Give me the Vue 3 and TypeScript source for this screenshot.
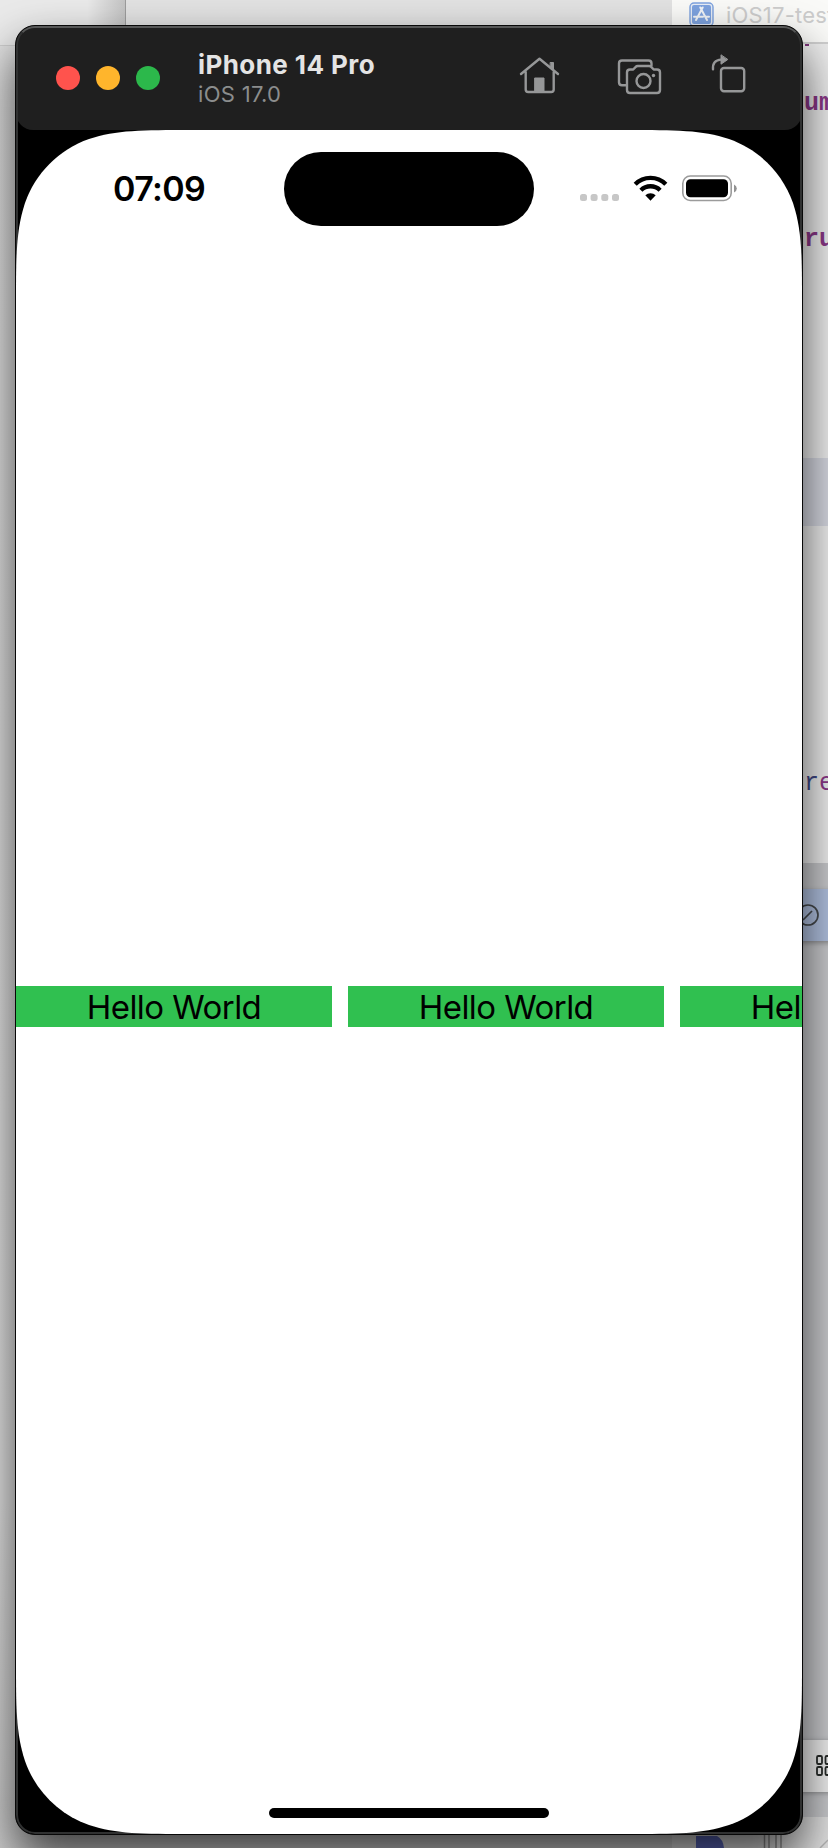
<script setup lang="ts">
interface Tile {
  id: number
  label: string
}

const device = { name: 'iPhone 14 Pro', os: 'iOS 17.0' }
const time = '07:09'
const lights: string[] = ['close', 'minimise', 'zoom']
const tiles: Tile[] = [1, 2, 3].map((id) => ({ id, label: 'Hello World' }))
</script>

<template>
  <main class="desktop">
    <div class="finder"></div>
    <section class="editor">
      <header class="tab">
        <svg class="app-icon" width="25" height="25" viewBox="0 0 25 25">
          <rect x="1" y="1" width="23" height="23" rx="4" fill="#e8edf6" stroke="#7da2df" stroke-width="1.4" />
          <rect x="3" y="3" width="19" height="19" rx="2" fill="#7da2df" />
          <path d="M13.7 5.5 7 18M11.3 5.5l6.7 12.5M5 14.7h9M17 14.7h3" fill="none" stroke="#f1f4f8" stroke-width="2" stroke-linecap="round" />
        </svg>
        <span>iOS17-test</span>
      </header>
      <i class="dot"></i>
      <code class="c1">um</code>
      <code class="c2">ru</code>
      <code class="c3"><b>r</b>e</code>
      <div class="current-line"></div>
    </section>
    <div class="canvas"></div>
    <div class="notice">
      <svg width="22" height="22" viewBox="0 0 22 22" fill="none" stroke="#45494c" stroke-width="1.7">
        <circle cx="11" cy="11" r="10" /><path d="M6 16l9-9" />
      </svg>
    </div>
    <div class="tools">
      <svg width="24" height="22" viewBox="0 0 24 22" fill="none" stroke="#272b29" stroke-width="1.8">
        <rect x="1" y="1" width="5" height="8" rx="1.3" /><rect x="9.5" y="1" width="5" height="8" rx="1.3" />
        <rect x="1" y="12" width="5" height="8" rx="1.3" /><rect x="9.5" y="12" width="5" height="8" rx="1.3" />
      </svg>
    </div>
    <div class="lower">
      <svg width="156" height="31" viewBox="0 0 156 31">
        <path d="M24 31V19h21q6 3 7 12z" fill="#5c69bd" />
        <path d="M92.500 0v31M97 0v31M104 0v31M109 0v31" stroke="#8d8d8d" stroke-width="1.500" />
        <path d="M148 31l8-8" stroke="#b4b4b4" stroke-width="1.500" />
      </svg>
    </div>

    <article class="simulator">
      <header class="titlebar">
        <div class="lights"><i v-for="l in lights" :key="l" :class="l"></i></div>
        <div class="names">
          <strong>{{ device.name }}</strong>
          <span>{{ device.os }}</span>
        </div>
        <svg class="actions" width="240" height="46" viewBox="510 50 240 46" fill="none" stroke="#969798" stroke-width="2.4" stroke-linecap="round" stroke-linejoin="round">
          <path d="M521 74l18.500-15.200L558 74M525.700 72v17.500q0 2.500 2.500 2.500h23q2.500 0 2.500-2.500V72" />
          <path d="M535 78h9v14h-9zM550.500 62.500h3v7l-3-2.500z" fill="#969798" stroke-width="1" />
          <path d="M625.500 85.300h-3.500q-3 0-3-3V63.500q0-3 3-3h26.500q3 0 3 3v2" />
          <path d="M630 69.500h3.200l2.500-2.600q.8-.9 2-.9h11.500q1.200 0 2 .9l2.500 2.600h3.300q3 0 3 3v17.500q0 3-3 3h-27q-3 0-3-3V72.500q0-3 3-3z" />
          <circle cx="643.500" cy="81" r="7" />
          <circle cx="653.500" cy="75.500" r="1.700" fill="#969798" stroke="none" />
          <rect x="721" y="68" width="23.200" height="23.200" rx="3" />
          <path d="M713 69.300q-.6-9.300 8-9.700" />
          <path d="M721 55.200v9l6.500-4.500z" fill="#969798" stroke-width="1" />
        </svg>
      </header>
      <div class="bezel">
        <div class="screen">
          <div class="status">
            <time>{{ time }}</time>
            <div class="island"></div>
            <svg class="indicators" width="160" height="30" viewBox="578 173 160 30">
              <g fill="#c7c7c7">
                <rect x="580" y="194" width="7" height="7" rx="2.500" /><rect x="590.600" y="194" width="7" height="7" rx="2.500" />
                <rect x="601.300" y="194" width="7" height="7" rx="2.500" /><rect x="612" y="194" width="7" height="7" rx="2.500" />
              </g>
              <g fill="none" stroke="#000" stroke-width="4.400">
                <path d="M635.200 184.200a21.700 21.700 0 0 1 30.600 0" />
                <path d="M640.900 190.200a13.700 13.700 0 0 1 19.200 0" />
              </g>
              <path d="M645.300 195.300a7.600 7.600 0 0 1 10.400 0l-5.200 5.400z" fill="#000" />
              <rect x="682.800" y="176" width="48.400" height="24.500" rx="7.500" fill="none" stroke="#9b9b9b" stroke-width="1.600" />
              <rect x="686" y="179.300" width="42" height="18" rx="4.500" fill="#000" />
              <path d="M734 184.500q2.800 1.300 2.800 4t-2.800 4z" fill="#929292" />
            </svg>
          </div>
          <div class="row">
            <div v-for="tile in tiles" :key="tile.id" class="tile"><span>{{ tile.label }}</span></div>
          </div>
          <div class="home-bar"></div>
        </div>
      </div>
    </article>
  </main>
</template>

<style>
html,
body {
  margin: 0;
  overflow: hidden;
}
</style>

<style scoped>
* {
  box-sizing: border-box;
}
.desktop {
  position: relative;
  width: 828px;
  height: 1848px;
  overflow: hidden;
  background: linear-gradient(#e2e2e2, #e6e6e6 1500px, #d0d0d0);
  font-family: Inter, "Liberation Sans", sans-serif;
}
.finder {
  position: absolute;
  left: 0;
  top: 0;
  width: 126px;
  height: 46px;
  background: linear-gradient(90deg, #eaeaea 70%, #c4c4c4);
  border-right: 1px solid #9c9c9c;
  border-bottom: 1px solid #cfcfcf;
}
.editor {
  position: absolute;
  left: 672px;
  top: 0;
  width: 156px;
  height: 863px;
  background: #ededed;
}
.tab {
  display: flex;
  gap: 12px;
  height: 44px;
  padding: 2px 0 0 17px;
  background: #fafaf8;
  border-bottom: 2px solid #cfcfcf;
  color: #cdcdcd;
  font-size: 22px;
  line-height: 27px;
  letter-spacing: 0.2px;
  white-space: nowrap;
}
.app-icon {
  flex: none;
}
.editor code {
  position: absolute;
  left: 132px;
  font: bold 25px/30px "Liberation Mono", monospace;
  color: #8a3787;
}
.editor .c1 {
  top: 89px;
}
.editor .c2 {
  top: 225px;
}
.editor .c3 {
  top: 769px;
  font-weight: normal;
}
.c3 b {
  font-weight: normal;
  color: #3f4684;
}
.dot {
  position: absolute;
  left: 133px;
  top: 44px;
  width: 4px;
  height: 2px;
  background: #7e357b;
}
.current-line {
  position: absolute;
  left: 0;
  top: 458px;
  width: 100%;
  height: 68px;
  background: rgba(184, 188, 208, 0.45);
}
.canvas {
  position: absolute;
  left: 672px;
  top: 863px;
  width: 156px;
  height: 954px;
  background: #c8c9cc;
}
.notice {
  position: absolute;
  left: 780px;
  top: 889px;
  width: 60px;
  height: 52px;
  padding: 15px 0 0 17px;
  background: #b0c0df;
  box-shadow: 0 2px 5px rgba(0, 0, 0, 0.3);
}
.tools {
  position: absolute;
  left: 780px;
  top: 1740px;
  width: 60px;
  height: 52px;
  padding: 15px 0 0 36px;
  background: #eee;
  box-shadow: 0 1px 5px rgba(0, 0, 0, 0.3);
}
.lower {
  position: absolute;
  left: 672px;
  top: 1817px;
  width: 156px;
  height: 31px;
  background: #e0e0e0;
}
.simulator {
  position: relative;
  display: flex;
  flex-direction: column;
  width: 788px;
  height: 1810px;
  margin: 25px 0 0 15px;
  overflow: hidden;
  border: 1px solid #080808;
  border-radius: 20px;
  background: #000;
  box-shadow: 0 24px 48px rgba(0, 0, 0, 0.7);
}
.simulator::after {
  position: absolute;
  inset: 0;
  border: 2px solid #303131;
  border-top-color: #575858;
  border-radius: 19px;
  content: "";
}
.titlebar {
  display: flex;
  flex: none;
  height: 104px;
  background: #1f1f1f;
  border-radius: 0 0 17px 17px;
}
.lights {
  display: flex;
  gap: 16px;
  padding: 40px 0 0 40px;
}
.lights i {
  width: 24px;
  height: 24px;
  border-radius: 50%;
}
.close {
  background: #ff534d;
}
.minimise {
  background: #ffb52c;
}
.zoom {
  background: #2cb84b;
}
.names {
  display: flex;
  flex-direction: column;
  width: 311px;
  padding: 23px 0 0 38px;
  white-space: nowrap;
}
.names strong {
  color: #e4e4e4;
  font-size: 26px;
  line-height: 32px;
  letter-spacing: 0.42px;
}
.names span {
  color: #8b8d8d;
  font-size: 22px;
  line-height: 27px;
  letter-spacing: 0.3px;
}
.actions {
  margin: 24px 0 0 39px;
}
.bezel {
  flex: 1;
  min-height: 0;
}
.screen {
  position: relative;
  z-index: 1;
  display: flex;
  flex-direction: column;
  align-items: center;
  height: 100%;
  overflow: hidden;
  background: #fff;
  clip-path: path("M176 0H610C660.300 0 685.700 0 713 9C743 19.500 766.500 43 777 73C786 100.300 786 125.700 786 176V1528C786 1578.300 786 1603.700 777 1631C766.500 1661 743 1684.500 713 1695C685.700 1704 660.300 1704 610 1704H176C125.700 1704 100.300 1704 73 1695C43 1684.500 19.500 1661 9 1631C0 1603.700 0 1578.300 0 1528V176C0 125.700 0 100.300 9 73C19.500 43 43 19.500 73 9C100.300 0 125.700 0 176 0Z");
}
.status {
  display: flex;
  align-items: flex-start;
  width: 100%;
  height: 106px;
  padding-top: 22px;
}
time {
  width: 268px;
  padding: 17px 0 0 97px;
  font-size: 34px;
  font-weight: 600;
  line-height: 40px;
  letter-spacing: -0.6px;
}
.island {
  width: 250px;
  height: 74px;
  border-radius: 37px;
  background: #000;
}
.indicators {
  margin: 21px 0 0 44px;
}
.row {
  display: flex;
  flex: none;
  align-self: stretch;
  gap: 16px;
  height: 41px;
  margin-top: 750px;
}
.tile {
  flex: none;
  width: 316px;
  height: 41px;
  background: #30c050;
  font-size: 33px;
  line-height: 43px;
  letter-spacing: -0.55px;
  text-align: center;
}
.home-bar {
  width: 280px;
  height: 10px;
  margin: auto 0 16px;
  border-radius: 5px;
  background: #000;
}
</style>
